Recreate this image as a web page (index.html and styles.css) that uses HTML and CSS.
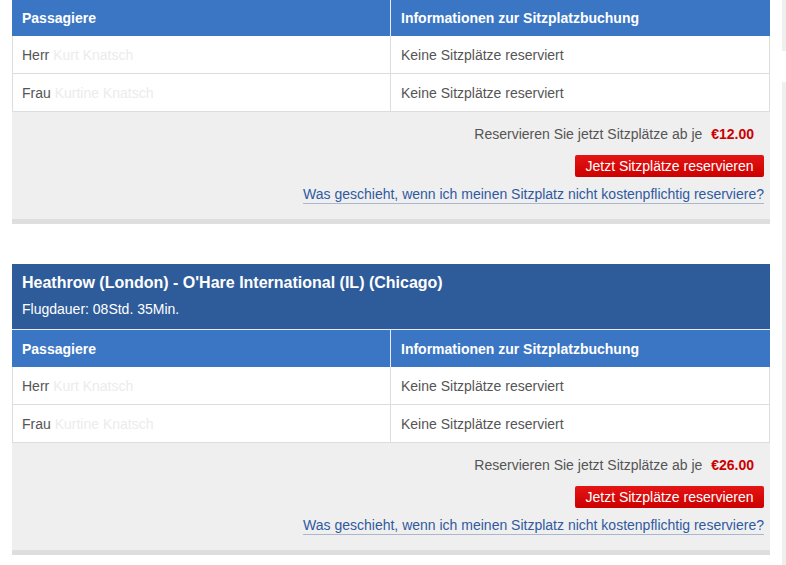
FILE: index.html
```html
<!DOCTYPE html>
<html lang="de">
<head>
<meta charset="utf-8">
<title>Sitzplatzbuchung</title>
<link rel="stylesheet" href="styles.css">
</head>
<body>
<div class="page">
  <main class="main">
    <section class="card">
      <div class="thead">
        <div class="th">Passagiere</div>
        <div class="th">Informationen zur Sitzplatzbuchung</div>
      </div>
      <div class="tr">
        <div class="td">Herr <span class="name">Kurt Knatsch</span></div>
        <div class="td">Keine Sitzplätze reserviert</div>
      </div>
      <div class="tr">
        <div class="td">Frau <span class="name">Kurtine Knatsch</span></div>
        <div class="td">Keine Sitzplätze reserviert</div>
      </div>
      <div class="foot">
        <div class="offer">Reservieren Sie jetzt Sitzplätze ab je <strong class="price">€12.00</strong></div>
        <button class="btn" type="button">Jetzt Sitzplätze reservieren</button>
        <a class="link" href="#">Was geschieht, wenn ich meinen Sitzplatz nicht kostenpflichtig reserviere?</a>
      </div>
    </section>

    <section class="card card-second">
      <div class="route">
        <h2 class="route-title">Heathrow (London) - O'Hare International (IL) (Chicago)</h2>
        <div class="route-dur">Flugdauer: 08Std. 35Min.</div>
      </div>
      <div class="thead">
        <div class="th">Passagiere</div>
        <div class="th">Informationen zur Sitzplatzbuchung</div>
      </div>
      <div class="tr">
        <div class="td">Herr <span class="name">Kurt Knatsch</span></div>
        <div class="td">Keine Sitzplätze reserviert</div>
      </div>
      <div class="tr">
        <div class="td">Frau <span class="name">Kurtine Knatsch</span></div>
        <div class="td">Keine Sitzplätze reserviert</div>
      </div>
      <div class="foot">
        <div class="offer">Reservieren Sie jetzt Sitzplätze ab je <strong class="price">€26.00</strong></div>
        <button class="btn" type="button">Jetzt Sitzplätze reservieren</button>
        <a class="link" href="#">Was geschieht, wenn ich meinen Sitzplatz nicht kostenpflichtig reserviere?</a>
      </div>
    </section>
  </main>
  <aside class="side">
    <div class="side-box side-top"></div>
    <div class="side-box side-bottom"></div>
  </aside>
</div>
</body>
</html>
```
FILE: styles.css
```css
* { box-sizing: border-box; }
html, body { margin: 0; padding: 0; background: #fff; }
body {
  font-family: "Liberation Sans", Arial, sans-serif;
  font-size: 14px;
  color: #555;
  overflow: hidden;
}
.page {
  display: flex;
  padding-left: 12px;
  gap: 12px;
  width: 786px;
  height: 565px;
}
.main {
  width: 758px;
  flex: none;
  display: flex;
  flex-direction: column;
  gap: 40px;
}
.card { background: #fff; }
.thead {
  display: grid;
  grid-template-columns: 378px 380px;
  background: #3b76c4;
  height: 36px;
}
.card-second .thead { height: 38px; border-top: 1px solid #e6edf7; }
.th {
  color: #fff;
  font-weight: bold;
  padding: 0 10px;
  display: flex;
  align-items: center;
}
.th + .th { border-left: 1px solid #e8eef8; }
.tr {
  display: grid;
  grid-template-columns: 377px 379px;
  height: 38px;
  border-left: 1px solid #ddd;
  border-right: 1px solid #ddd;
  border-bottom: 1px solid #ddd;
}
.td {
  padding: 0 9px;
  display: flex;
  align-items: center;
  white-space: pre;
}
.td + .td { border-left: 1px solid #ddd; padding-left: 10px; }
.name { color: #ececec; }
.route {
  background: #2e5c9a;
  color: #fff;
  height: 65px;
  padding: 10px 10px 0;
}
.route-title {
  margin: 0;
  font-size: 16px;
  font-weight: bold;
  line-height: 18px;
}
.route-dur {
  font-size: 14px;
  margin-top: 9px;
  line-height: 16px;
}
.foot {
  background: #efefef;
  border-bottom: 5px solid #dedede;
  display: flex;
  flex-direction: column;
  align-items: flex-end;
  padding: 14px 6px 15px 0;
  height: 112px;
}
.offer {
  line-height: 16px;
  padding-right: 10px;
}
.price {
  color: #c00;
  margin-left: 5px;
}
.btn {
  margin-top: 13px;
  height: 22px;
  width: 189px;
  border: none;
  border-radius: 2px;
  background: linear-gradient(#e41515, #cc0000);
  color: #fff;
  font-family: inherit;
  font-size: 14px;
  padding: 0;
  line-height: 22px;
}
.link {
  margin-top: 9px;
  color: #2f5aa0;
  text-decoration: none;
  border-bottom: 1px solid #aab7cc;
  line-height: 17px;
}
.side {
  width: 4px;
  flex: none;
  display: flex;
  flex-direction: column;
}
.side-box { background: #efefef; }
.side-top { height: 51px; }
.side-bottom { margin-top: 31px; flex: 1; }
```
